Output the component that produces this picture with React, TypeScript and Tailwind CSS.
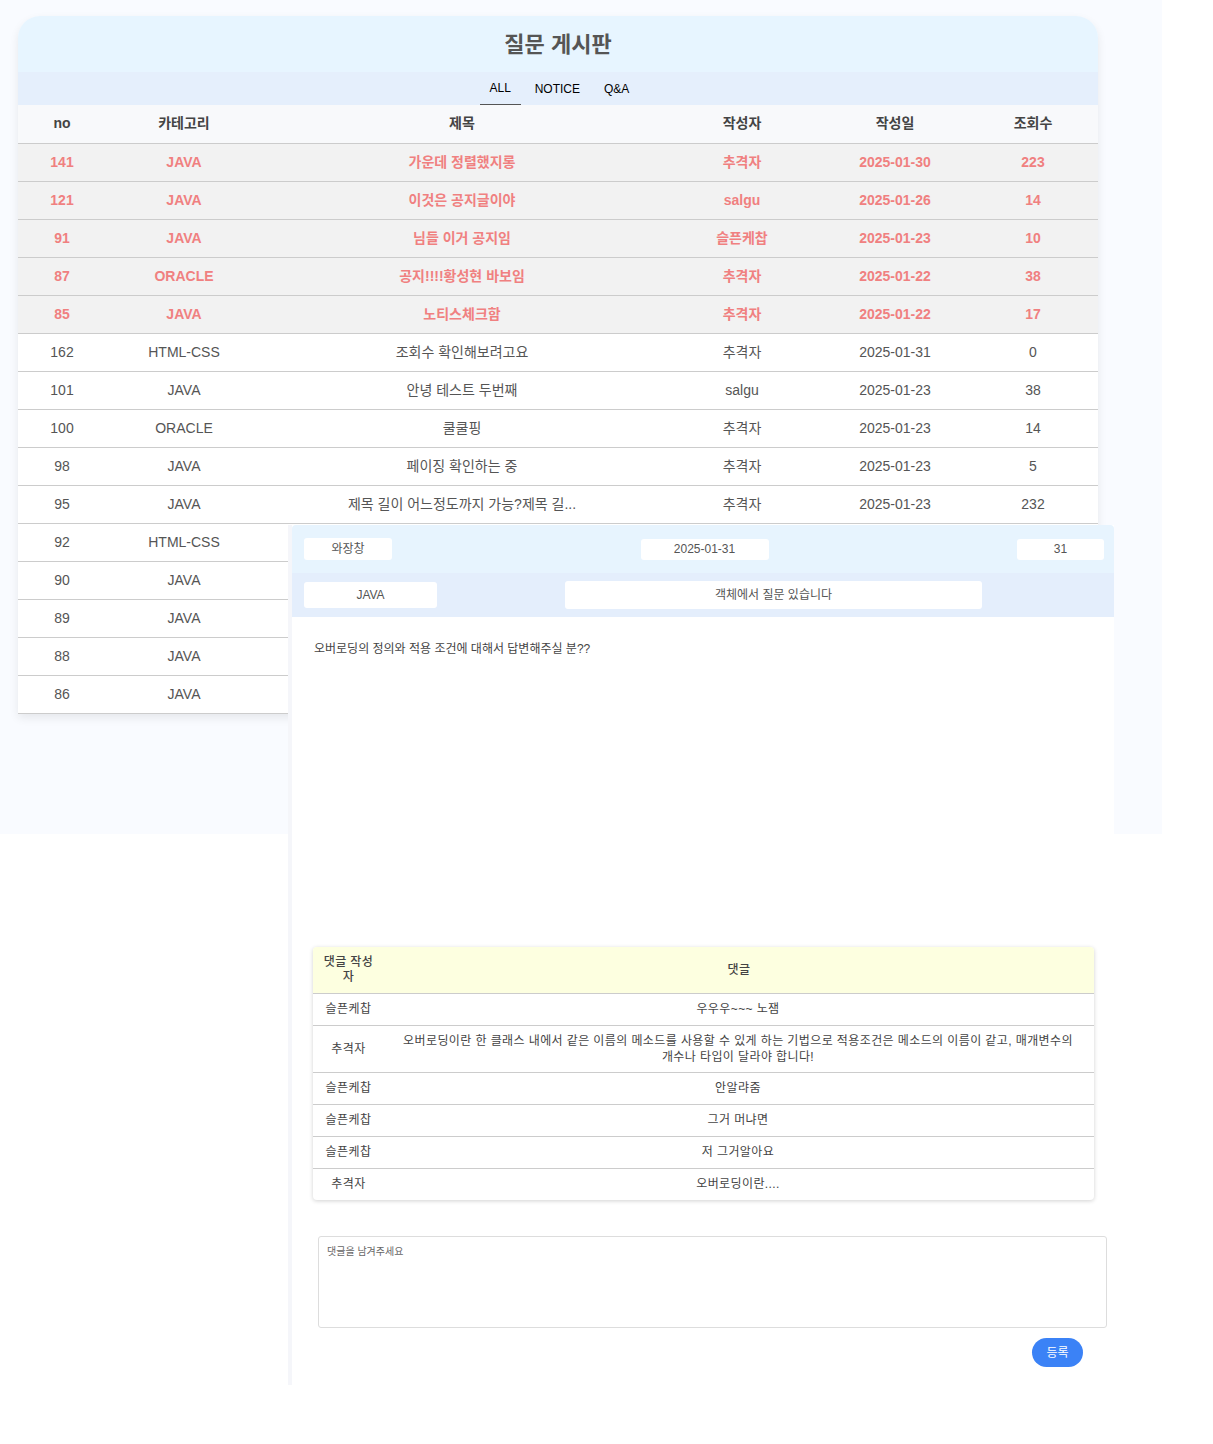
import React from 'react';

type Post = { no: number; category: string; title: string; writer: string; date: string; views: number | string };

const notices: Post[] = [
  { no: 141, category: 'JAVA', title: '가운데 정렬했지롱', writer: '추격자', date: '2025-01-30', views: 223 },
  { no: 121, category: 'JAVA', title: '이것은 공지글이야', writer: 'salgu', date: '2025-01-26', views: 14 },
  { no: 91, category: 'JAVA', title: '님들 이거 공지임', writer: '슬픈케찹', date: '2025-01-23', views: 10 },
  { no: 87, category: 'ORACLE', title: '공지!!!!황성현 바보임', writer: '추격자', date: '2025-01-22', views: 38 },
  { no: 85, category: 'JAVA', title: '노티스체크함', writer: '추격자', date: '2025-01-22', views: 17 },
];

const posts: Post[] = [
  { no: 162, category: 'HTML-CSS', title: '조회수 확인해보려고요', writer: '추격자', date: '2025-01-31', views: 0 },
  { no: 101, category: 'JAVA', title: '안녕 테스트 두번째', writer: 'salgu', date: '2025-01-23', views: 38 },
  { no: 100, category: 'ORACLE', title: '쿨쿨핑', writer: '추격자', date: '2025-01-23', views: 14 },
  { no: 98, category: 'JAVA', title: '페이징 확인하는 중', writer: '추격자', date: '2025-01-23', views: 5 },
  { no: 95, category: 'JAVA', title: '제목 길이 어느정도까지 가능?제목 길...', writer: '추격자', date: '2025-01-23', views: 232 },
];

// rows partly hidden behind the detail panel
const hiddenPosts: Post[] = [
  { no: 92, category: 'HTML-CSS', title: '', writer: '', date: '', views: '' },
  { no: 90, category: 'JAVA', title: '', writer: '', date: '', views: '' },
  { no: 89, category: 'JAVA', title: '', writer: '', date: '', views: '' },
  { no: 88, category: 'JAVA', title: '', writer: '', date: '', views: '' },
  { no: 86, category: 'JAVA', title: '', writer: '', date: '', views: '' },
];

const comments = [
  { writer: '슬픈케찹', text: '우우우~~~ 노잼' },
  {
    writer: '추격자',
    text: '오버로딩이란 한 클래스 내에서 같은 이름의 메소드를 사용할 수 있게 하는 기법으로 적용조건은 메소드의 이름이 같고, 매개변수의 개수나 타입이 달라야 합니다!',
  },
  { writer: '슬픈케찹', text: '안알랴줌' },
  { writer: '슬픈케찹', text: '그거 머냐면' },
  { writer: '슬픈케찹', text: '저 그거알아요' },
  { writer: '추격자', text: '오버로딩이란....' },
];

function Row({ post, notice }: { post: Post; notice?: boolean }) {
  const cell = 'h-[38px] text-center';
  return (
    <tr
      className={
        notice
          ? 'bg-[#f2f2f2] text-[#f08080] font-bold border-b border-[#cccccc]'
          : 'bg-white text-[#555555] border-b border-[#cccccc]'
      }
    >
      <td className={cell}>{post.no}</td>
      <td className={cell}>{post.category}</td>
      <td className={cell}>{post.title}</td>
      <td className={cell}>{post.writer}</td>
      <td className={cell}>{post.date}</td>
      <td className={cell}>{post.views}</td>
    </tr>
  );
}

function Detail() {
  return (
    <div className="absolute left-[288px] top-[525px] w-[826px] h-[860px] bg-white border-l-[4px] border-[#f5f6fa] text-[12px] text-[#555555]">
      <div className="h-[48px] bg-[#e7f4fe] rounded-tl-[4px] rounded-tr-[4px] flex items-center justify-between pl-[12px] pr-[10px]">
        <div className="w-[88px] h-[22px] bg-white rounded-[3px] flex items-center justify-center">와장창</div>
        <div className="w-[128px] h-[21px] bg-white rounded-[3px] flex items-center justify-center">2025-01-31</div>
        <div className="w-[87px] h-[21px] bg-white rounded-[3px] flex items-center justify-center">31</div>
      </div>
      <div className="h-[44px] bg-[#e4eefc] flex items-center pl-[12px]">
        <div className="w-[133px] h-[26px] bg-white rounded-[3px] flex items-center justify-center">JAVA</div>
        <div className="w-[417px] h-[28px] bg-white rounded-[3px] flex items-center justify-center ml-[128px]">
          객체에서 질문 있습니다
        </div>
      </div>
      <div className="px-[22px] pt-[23px] h-[330px] text-[#444444]">오버로딩의 정의와 적용 조건에 대해서 답변해주실 분??</div>

      <div className="ml-[21px] w-[781px] rounded-[4px] shadow-[0_1px_4px_rgba(0,0,0,0.18)] overflow-hidden">
        <table className="w-full table-fixed border-collapse text-[#444444] tracking-[0.4px] break-keep">
          <colgroup>
            <col className="w-[71px]" />
            <col />
          </colgroup>
          <thead>
            <tr className="bg-[#fdffe0] border-b border-[#cccccc]">
              <th className="h-[46px] font-medium leading-[15px] px-[6px] break-normal">댓글 작성자</th>
              <th className="font-medium">댓글</th>
            </tr>
          </thead>
          <tbody>
            {comments.map((c, i) => (
              <tr key={i} className={i < comments.length - 1 ? 'border-b border-[#cccccc]' : ''}>
                <td className="h-[32px] text-center">{c.writer}</td>
                <td className="text-center leading-[16px] py-[7px] pl-[6px] pr-[8px]">{c.text}</td>
              </tr>
            ))}
          </tbody>
        </table>
      </div>

      <div className="ml-[26px] mt-[36px] w-[789px] h-[92px] border border-[#dddddd] rounded-[3px] px-[8px] py-[7px] text-[10px] text-[#666666]">
        댓글을 남겨주세요
      </div>
      <div className="flex justify-end pr-[31px] mt-[10px]">
        <button className="w-[51px] h-[29px] rounded-full bg-[#3b82f6] text-white text-[12px]">등록</button>
      </div>
    </div>
  );
}

export default function App() {
  return (
    <div className="relative w-[1213px] h-[1444px] bg-white font-['Liberation_Sans','Noto_Sans_CJK_KR',sans-serif]">
      <div className="w-[1162px] h-[834px] bg-[#f9fbff] pt-[16px] pl-[18px]">
        <div className="w-[1080px] rounded-t-[22px] shadow-[0_4px_10px_rgba(0,0,0,0.08)] overflow-hidden">
          <div className="h-[56px] bg-[#e7f5ff] flex items-center justify-center">
            <h1 className="text-[22px] font-bold text-[#555555]">질문 게시판</h1>
          </div>
          <div className="h-[33px] bg-[#e5effc] flex justify-center items-stretch gap-[2px] text-[12px] text-black">
            <div className="w-[41px] ml-[3px] flex items-center justify-center border-b border-[#555555]">ALL</div>
            <div className="px-[12px] flex items-center">NOTICE</div>
            <div className="px-[10px] flex items-center">Q&amp;A</div>
          </div>
          <table className="w-full table-fixed border-collapse text-[14px]">
            <colgroup>
              <col className="w-[88px]" />
              <col className="w-[156px]" />
              <col className="w-[400px]" />
              <col className="w-[160px]" />
              <col className="w-[146px]" />
              <col className="w-[130px]" />
            </colgroup>
            <thead>
              <tr className="bg-[#f8f9fb] text-[#444444] border-b border-[#cccccc]">
                <th className="h-[38px] font-bold">no</th>
                <th className="font-bold">카테고리</th>
                <th className="font-bold">제목</th>
                <th className="font-bold">작성자</th>
                <th className="font-bold">작성일</th>
                <th className="font-bold">조회수</th>
              </tr>
            </thead>
            <tbody>
              {notices.map((p) => (
                <Row key={p.no} post={p} notice />
              ))}
              {posts.map((p) => (
                <Row key={p.no} post={p} />
              ))}
              {hiddenPosts.map((p) => (
                <Row key={p.no} post={p} />
              ))}
            </tbody>
          </table>
        </div>
      </div>
      <Detail />
    </div>
  );
}
